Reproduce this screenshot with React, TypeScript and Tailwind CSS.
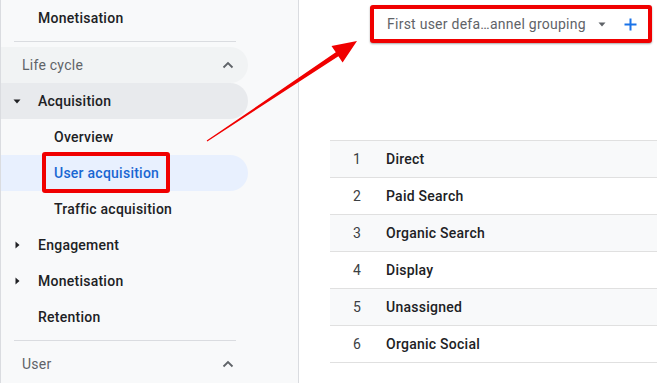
import React from 'react';

const rows = ['Direct', 'Paid Search', 'Organic Search', 'Display', 'Unassigned', 'Organic Social'];

const ChevronUp = () => (
  <svg width="12" height="8" viewBox="0 0 12 8" className="text-[#5f6368]">
    <path d="M1.5 6.5 L6 2 L10.5 6.5" fill="none" stroke="currentColor" strokeWidth="1.8" />
  </svg>
);

const CaretDown = () => (
  <svg width="8" height="5" viewBox="0 0 8 5" className="text-[#202124]">
    <path d="M0.5 0.5 H7.5 L4 4.5 Z" fill="currentColor" />
  </svg>
);

const CaretRight = () => (
  <svg width="5" height="8" viewBox="0 0 5 8" className="text-[#202124]">
    <path d="M0.5 0.5 V7.5 L4.5 4 Z" fill="currentColor" />
  </svg>
);

const Divider = () => <div className="ml-[13px] my-[5px] h-px w-[222px] bg-[#dadce0]" />;

// Arrow drawn over the page, pointing from the highlighted item to the dropdown
const Arrow = () => (
  <svg className="pointer-events-none absolute inset-0" width="657" height="383" viewBox="0 0 657 383">
    <polygon
      points="206.7,140.6 335.8,52.3 331.5,46 357,41 342.6,62.6 338.4,56.3 207.3,141.4"
      fill="#f00000"
    />
  </svg>
);

export default function App() {
  return (
    <div className="relative flex h-[383px] w-[657px] overflow-hidden bg-white font-['Roboto',sans-serif] text-[14px] tracking-[0.25px] text-[#202124]">
      {/* Sidebar */}
      <aside className="w-[299px] shrink-0 border-x border-[#dadce0] bg-[#f8f9fa]">
        <div className="flex h-9 items-center pl-[37px] font-medium">Monetisation</div>
        <Divider />
        <div className="flex h-9 w-[247px] items-center justify-between rounded-r-full bg-[#f1f3f4] pl-[21px] pr-[14px] text-[#5f6368]">
          <span>Life cycle</span>
          <ChevronUp />
        </div>
        <div className="flex h-9 w-[247px] items-center rounded-r-full bg-[#e8eaed] font-medium">
          <span className="flex w-[37px] justify-start pl-[12px]"><CaretDown /></span>
          Acquisition
        </div>
        <div className="flex h-9 items-center pl-[53px] font-medium">Overview</div>
        <div className="relative flex h-9 w-[247px] items-center rounded-r-full bg-[#e8f0fe] pl-[53px] font-medium text-[#1967d2]">
          User acquisition
          <div className="absolute left-[41px] top-[-3px] h-[41px] w-[128px] rounded-[3px] border-4 border-[#f00000]" />
        </div>
        <div className="flex h-9 items-center pl-[53px] font-medium">Traffic acquisition</div>
        <div className="flex h-9 items-center font-medium">
          <span className="flex w-[37px] pl-[14px]"><CaretRight /></span>
          Engagement
        </div>
        <div className="flex h-9 items-center font-medium">
          <span className="flex w-[37px] pl-[14px]"><CaretRight /></span>
          Monetisation
        </div>
        <div className="flex h-9 items-center pl-[37px] font-medium">Retention</div>
        <Divider />
        <div className="flex h-9 w-[247px] items-center justify-between pl-[21px] pr-[14px] text-[#5f6368]">
          <span>User</span>
          <ChevronUp />
        </div>
      </aside>

      {/* Main */}
      <main className="flex-1">
        <div className="flex justify-end pr-[5px] pt-[5px]">
          <div className="flex h-[38px] w-[282px] items-center rounded-[3px] border-4 border-[#f00000] bg-white pl-[13px] shadow-[0_1px_2px_rgba(0,0,0,0.35)]">
            <span className="text-[#5f6368]">First user defa…annel grouping</span>
            <svg width="8" height="5" viewBox="0 0 8 5" className="ml-[12px] text-[#5f6368]">
              <path d="M0.5 0.5 H7.5 L4 4.5 Z" fill="currentColor" />
            </svg>
            <svg width="13" height="13" viewBox="0 0 13 13" className="ml-[18px] text-[#1a73e8]">
              <path d="M6.5 0.5 V12.5 M0.5 6.5 H12.5" stroke="currentColor" strokeWidth="2" />
            </svg>
          </div>
        </div>

        <div className="ml-[31px] mt-[97px] border-t border-[#e0e0e0]">
          {rows.map((label, i) => (
            <div
              key={label}
              className={`flex h-[37px] items-center border-b border-[#e0e0e0] ${i % 2 === 0 ? 'bg-[#f8f9fa]' : 'bg-white'}`}
            >
              <span className="w-[56px] pl-[23px] text-[#3c4043]">{i + 1}</span>
              <span className="font-medium">{label}</span>
            </div>
          ))}
        </div>
      </main>

      <Arrow />
    </div>
  );
}
